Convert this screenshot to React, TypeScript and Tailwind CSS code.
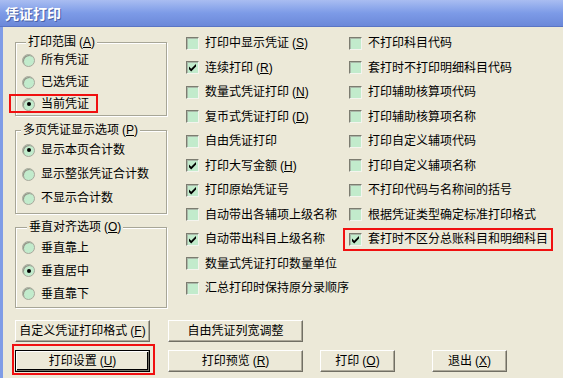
import React from 'react'

// ── option data ──────────────────────────────────────────────────

type Opt = { label: string; key?: string; checked?: boolean }

const MIDDLE: Opt[] = [
  { label: '打印中显示凭证', key: 'S' },
  { label: '连续打印', key: 'R', checked: true },
  { label: '数量式凭证打印', key: 'N' },
  { label: '复币式凭证打印', key: 'D' },
  { label: '自由凭证打印' },
  { label: '打印大写金额', key: 'H', checked: true },
  { label: '打印原始凭证号', checked: true },
  { label: '自动带出各辅项上级名称' },
  { label: '自动带出科目上级名称', checked: true },
  { label: '数量式凭证打印数量单位' },
  { label: '汇总打印时保持原分录顺序' },
]

const RIGHT: Opt[] = [
  { label: '不打印科目代码' },
  { label: '套打时不打印明细科目代码' },
  { label: '打印辅助核算项代码' },
  { label: '打印辅助核算项名称' },
  { label: '打印自定义辅项代码' },
  { label: '打印自定义辅项名称' },
  { label: '不打印代码与名称间的括号' },
  { label: '根据凭证类型确定标准打印格式' },
  { label: '套打时不区分总账科目和明细科目', checked: true },
]

// ── small controls ───────────────────────────────────────────────

function Key({ k }: { k?: string }) {
  if (!k) return null
  return (
    <span className="ml-[3px]">
      (<span className="underline">{k}</span>)
    </span>
  )
}

function Check({ label, k, checked }: { label: string; k?: string; checked?: boolean }) {
  return (
    <div className="flex items-center h-[24.5px] gap-[6px] whitespace-nowrap">
      <span className="relative w-[13px] h-[13px] shrink-0 border-t border-l border-[#7c7c70] border-b border-r border-b-[#f4f4ee] border-r-[#f4f4ee] bg-[#c2ebcc] shadow-[inset_1px_1px_0_#a8b8a8]">
        {checked && (
          <svg viewBox="0 0 11 11" className="absolute left-0 top-0 w-[11px] h-[11px]">
            <path d="M2 4.6 L4.2 6.8 L9 2 L9 4.6 L4.2 9.4 L2 7.2 Z" fill="#000" />
          </svg>
        )}
      </span>
      <span>
        {label}
        <Key k={k} />
      </span>
    </div>
  )
}

function Radio({ label, checked, h }: { label: string; checked?: boolean; h: string }) {
  return (
    <div className={`flex items-center gap-[6px] whitespace-nowrap ${h}`}>
      <span className="w-[13px] h-[13px] shrink-0 rounded-full border border-[#a8a89c] bg-[#c2ebcc] flex items-center justify-center shadow-[inset_1px_1px_0_#949488]">
        {checked && <span className="w-[4px] h-[4px] rounded-full bg-black" />}
      </span>
      <span>{label}</span>
    </div>
  )
}

function Group({ label, k, labelLeft, className, children }: {
  label: string; k: string; labelLeft: string; className: string; children: React.ReactNode
}) {
  return (
    <div className={`relative border border-[#a7a697] shadow-[1px_1px_0_#fff,inset_1px_1px_0_#fff] pl-[6px] ${className}`}>
      <span className={`absolute -top-[8px] ${labelLeft} px-[2px] bg-[#ece9d8] leading-[14px] whitespace-nowrap`}>
        {label}
        <Key k={k} />
      </span>
      {children}
    </div>
  )
}

function Btn({ children, w, focused }: { children: React.ReactNode; w: string; focused?: boolean }) {
  return (
    <div className={`${w} h-[22px] ${focused ? 'border border-black' : ''}`}>
      <div className={`h-full w-full border-t border-l border-white border-b border-r border-b-[#716f64] border-r-[#716f64] ${focused ? 'shadow-[inset_-1px_-1px_0_#000]' : 'shadow-[inset_-1px_-1px_0_#aca899]'} bg-[#ece9d8] flex items-center justify-center whitespace-nowrap`}>
        {children}
      </div>
    </div>
  )
}

// ── main component ───────────────────────────────────────────────

export default function App() {
  return (
    <div className="relative w-[563px] h-[378px] overflow-hidden bg-[#ece9d8] text-[12px] leading-[14px] text-black font-['Liberation_Sans','Noto_Sans_CJK_SC',sans-serif]">
      {/* title bar */}
      <div className="h-[27px] bg-linear-to-b from-[#a9bdf1] via-[#7d9be7] to-[#6b88d9] border-b border-[#5a75c4] flex items-center pl-[5px]">
        <span className="text-white font-bold text-[14px] font-['Noto_Sans_CJK_SC',sans-serif] [text-shadow:1px_1px_0_#4a62a8]">凭证打印</span>
      </div>

      <div className="border-l-[3px] border-[#7f9ce6] h-[351px]">
        <div className="flex">
          {/* left column */}
          <div className="ml-[12px] mt-[15px] w-[152px] flex flex-col">
            <Group label="打印范围" k="A" labelLeft="left-[10px]" className="h-[74px] pt-[6px]">
              <Radio label="所有凭证" h="h-[22px]" />
              <Radio label="已选凭证" h="h-[22px]" />
              <Radio label="当前凭证" h="h-[22px]" checked />
            </Group>
            <Group label="多页凭证显示选项" k="P" labelLeft="left-[5px]" className="h-[84px] mt-[14px] pt-[7px]">
              <Radio label="显示本页合计数" h="h-[24px]" checked />
              <Radio label="显示整张凭证合计数" h="h-[24px]" />
              <Radio label="不显示合计数" h="h-[24px]" />
            </Group>
            <Group label="垂直对齐选项" k="O" labelLeft="left-[11px]" className="h-[81px] mt-[13px] pt-[8px]">
              <Radio label="垂直靠上" h="h-[23px]" />
              <Radio label="垂直居中" h="h-[23px]" checked />
              <Radio label="垂直靠下" h="h-[23px]" />
            </Group>
          </div>

          {/* middle column */}
          <div className="ml-[19px] pt-[4px] w-[163px] flex flex-col">
            {MIDDLE.map((o) => (
              <Check key={o.label} label={o.label} k={o.key} checked={o.checked} />
            ))}
          </div>

          {/* right column */}
          <div className="pt-[4px] flex flex-col">
            {RIGHT.map((o) => (
              <Check key={o.label} label={o.label} k={o.key} checked={o.checked} />
            ))}
          </div>
        </div>

        {/* buttons */}
        <div className="mt-[12px] ml-[12px] flex flex-col gap-[8px]">
          <div className="flex gap-[18px]">
            <Btn w="w-[135px]">自定义凭证打印格式<Key k="F" /></Btn>
            <Btn w="w-[135px]">自由凭证列宽调整</Btn>
          </div>
          <div className="flex">
            <Btn w="w-[135px]" focused>打印设置<Key k="U" /></Btn>
            <div className="ml-[18px]"><Btn w="w-[135px]">打印预览<Key k="R" /></Btn></div>
            <div className="ml-[17px]"><Btn w="w-[75px]">打印<Key k="O" /></Btn></div>
            <div className="ml-[37px]"><Btn w="w-[75px]">退出<Key k="X" /></Btn></div>
          </div>
        </div>
      </div>

      {/* red highlight marks */}
      <div className="absolute left-[9px] top-[94px] w-[89px] h-[19px] border-2 border-[#f01010] pointer-events-none" />
      <div className="absolute left-[343px] top-[228px] w-[210px] h-[23px] border-2 border-[#f01010] pointer-events-none" />
      <div className="absolute left-[12px] top-[344px] w-[143px] h-[31px] border-2 border-[#f01010] pointer-events-none" />
    </div>
  )
}
